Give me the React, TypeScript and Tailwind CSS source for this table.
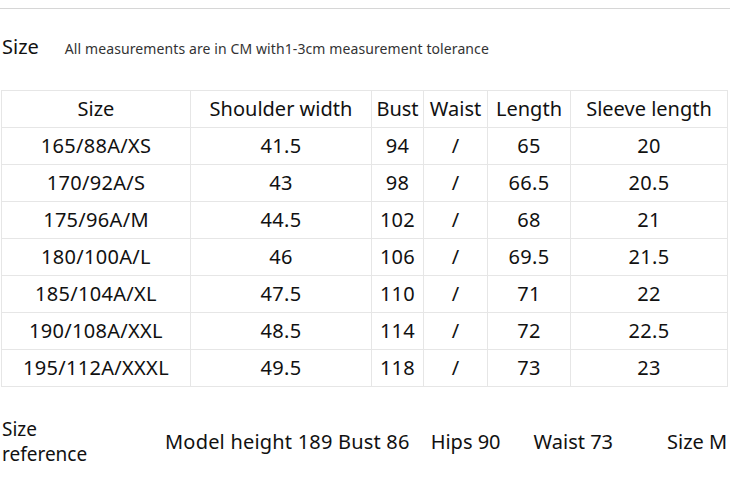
import React from "react";

const rows = [
  ["165/88A/XS", "41.5", "94", "/", "65", "20"],
  ["170/92A/S", "43", "98", "/", "66.5", "20.5"],
  ["175/96A/M", "44.5", "102", "/", "68", "21"],
  ["180/100A/L", "46", "106", "/", "69.5", "21.5"],
  ["185/104A/XL", "47.5", "110", "/", "71", "22"],
  ["190/108A/XXL", "48.5", "114", "/", "72", "22.5"],
  ["195/112A/XXXL", "49.5", "118", "/", "73", "23"],
];

const headers = ["Size", "Shoulder width", "Bust", "Waist", "Length", "Sleeve length"];
const widths = ["w-[189px]", "w-[181px]", "w-[52px]", "w-[64px]", "w-[83px]", "w-[157px]"];

export default function App() {
  return (
    <div className="w-[730px] h-[486px] bg-white text-[#111] overflow-hidden font-['Noto_Sans',sans-serif]">
      <div className="pt-[8px]">
        <div className="h-px bg-[#d6d6d6]" />
      </div>

      {/* Title */}
      <div className="flex items-end h-[48px] pl-[2px]">
        <span className="text-[20px] leading-none">Size</span>
        <span className="ml-[26px] text-[14px] leading-none tracking-[0.1px] text-[#333] pb-[1px]">
          All measurements are in CM with1-3cm measurement tolerance
        </span>
      </div>

      {/* Table */}
      <table className="mt-[33px] ml-px border-collapse table-fixed">
        <thead>
          <tr className="h-[37px]">
            {headers.map((h, i) => (
              <th key={h} className={`${widths[i]} border border-[#e6e6e6] font-normal text-[20px] text-center p-0`}>
                {h}
              </th>
            ))}
          </tr>
        </thead>
        <tbody>
          {rows.map((r) => (
            <tr key={r[0]} className="h-[37px]">
              {r.map((c, i) => (
                <td key={i} className="border border-[#e6e6e6] text-[20px] tracking-[0.3px] text-center p-0">
                  {c}
                </td>
              ))}
            </tr>
          ))}
        </tbody>
      </table>

      {/* Model reference */}
      <div className="mt-[30px] flex items-center text-[20px] whitespace-nowrap">
        <div className="w-[165px] shrink-0 pl-[2px] flex flex-col text-[19px]">
          <span className="h-[25px] leading-[25px]">Size</span>
          <span className="h-[25px] leading-[25px]">reference</span>
        </div>
        <span className="shrink-0 tracking-[0.2px]">Model height 189 Bust 86</span>
        <span className="shrink-0 ml-[21px]">Hips 90</span>
        <span className="shrink-0 ml-[33px]">Waist 73</span>
        <span className="shrink-0 ml-[54px]">Size M</span>
      </div>
    </div>
  );
}
